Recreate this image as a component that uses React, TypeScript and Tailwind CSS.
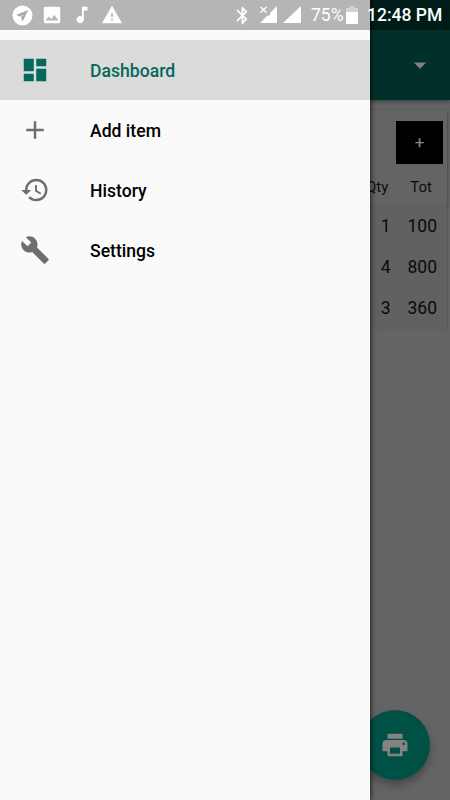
import React from 'react';
import {
  MdAdd,
  MdArrowDropDown,
  MdBluetooth,
  MdBuild,
  MdDashboard,
  MdHistory,
  MdImage,
  MdMusicNote,
  MdPrint,
  MdWarning,
} from 'react-icons/md';

const menuItems = [
  { label: 'Dashboard', icon: <MdDashboard size={30} />, active: true },
  { label: 'Add item', icon: <MdAdd size={30} />, active: false },
  { label: 'History', icon: <MdHistory size={30} />, active: false },
  { label: 'Settings', icon: <MdBuild size={30} />, active: false },
];

const rows = [
  { qty: 1, total: 100 },
  { qty: 4, total: 800 },
  { qty: 3, total: 360 },
];

function StatusBar() {
  return (
    <div className="absolute inset-x-0 top-0 z-20 flex h-[30px] items-center text-white">
      <div className="flex h-full w-[370px] items-center bg-[#b5b5b5] pl-[12px]">
        <svg width="21" height="21" viewBox="0 0 21 21">
          <circle cx="10.5" cy="10.5" r="10" fill="#fff" />
          <path d="M16.2 5 4 10l4.8 1.8 1.8 4.8z" fill="#a9a9a9" />
          <path d="m8.4 12.2 2.6-2" stroke="#fff" strokeWidth="0.8" />
        </svg>
        <MdImage size={22} className="ml-[8px]" />
        <MdMusicNote size={22} className="ml-[8px]" />
        <MdWarning size={22} className="ml-[8px]" />
        <MdBluetooth size={21} className="ml-[109px]" />
        <svg width="19" height="18" viewBox="0 0 19 18" className="ml-[6px]">
          <path d="M18 0v17H1l7.5-7.5H11V7z" fill="#fff" />
          <path d="m1.5 .8 6 6m0-6-6 6" stroke="#fff" strokeWidth="1.3" />
        </svg>
        <svg width="18" height="18" viewBox="0 0 18 18" className="ml-[5px]">
          <path d="M18 0v17H0z" fill="#fff" />
        </svg>
        <span className="ml-[10px] w-[34px] pt-px text-[17.5px]">75%</span>
        <svg width="12" height="18" viewBox="0 0 12 18" className="ml-px">
          <path d="M4 0h4v2h4v5H0V2h4z" fill="#d4d4d4" />
          <path d="M0 6h12v11q0 1-1 1H1q-1 0-1-1z" fill="#fff" />
        </svg>
      </div>
      <span className="absolute left-[367px] whitespace-nowrap pt-px text-[17.5px] font-medium">12:48 PM</span>
    </div>
  );
}

function Drawer() {
  return (
    <nav className="absolute inset-y-0 left-0 z-10 w-[370px] bg-[#fafafa] pt-[40px] shadow-[1px_0_5px_rgba(0,0,0,0.7)]">
      {menuItems.map((item) => (
        <a
          key={item.label}
          className={`flex h-[60px] items-center pl-[20px] text-[17.6px] font-medium ${
            item.active ? 'bg-[#dbdbdb] text-[#04695c]' : 'text-black'
          }`}
        >
          <span className={item.active ? 'text-[#04695c]' : 'text-[#6e6e6e]'}>{item.icon}</span>
          <span className="ml-[40px] pt-[2px]">{item.label}</span>
        </a>
      ))}
    </nav>
  );
}

// page behind the drawer, already dimmed
function Dashboard() {
  return (
    <div className="flex h-full flex-col bg-[#646464]">
      <div className="h-[30px] shrink-0 bg-[#001c18]" />
      <header className="flex h-[70px] shrink-0 items-center justify-end bg-[#003029] pr-[15px] shadow-[0_2px_4px_rgba(0,0,0,0.35)]">
        <MdArrowDropDown size={30} className="text-[#808080]" />
      </header>
      <section className="mr-[3px] mt-[10px] h-[95px] shrink-0 rounded-[2px] bg-[#646464] pt-[11px] shadow-[0_1px_3px_rgba(0,0,0,0.5)]">
        <div className="flex justify-end pr-[4px]">
          <button className="flex h-[43px] w-[47px] items-center justify-center bg-black pt-px text-[17px] text-[#8a8a8a]">
            +
          </button>
        </div>
        <div className="mt-[13px] flex justify-end pr-[15px] text-[15px] leading-[20px] text-[#0d0d0d]">
          <span>Qty</span>
          <span className="ml-[22px]">Tot</span>
        </div>
      </section>
      <div className="mr-[3px] bg-[#616161] pt-px shadow-[1px_0_1px_rgba(0,0,0,0.12)]">
        {rows.map((row) => (
          <div key={row.total} className="flex h-[41px] items-center justify-end pr-[10px] text-[17.5px] text-[#0a0a0a]">
            <span>{row.qty}</span>
            <span className="ml-[17px]">{row.total}</span>
          </div>
        ))}
      </div>
      <button className="absolute bottom-[20px] right-[20px] flex size-[70px] items-center justify-center rounded-full bg-[#005145] text-[#838383] shadow-[0_5px_9px_rgba(0,0,0,0.3)]">
        <MdPrint size={30} />
      </button>
    </div>
  );
}

export default function App() {
  return (
    <div className="relative h-[800px] w-[450px] overflow-hidden font-[Roboto,sans-serif]">
      <Dashboard />
      <Drawer />
      <StatusBar />
    </div>
  );
}
